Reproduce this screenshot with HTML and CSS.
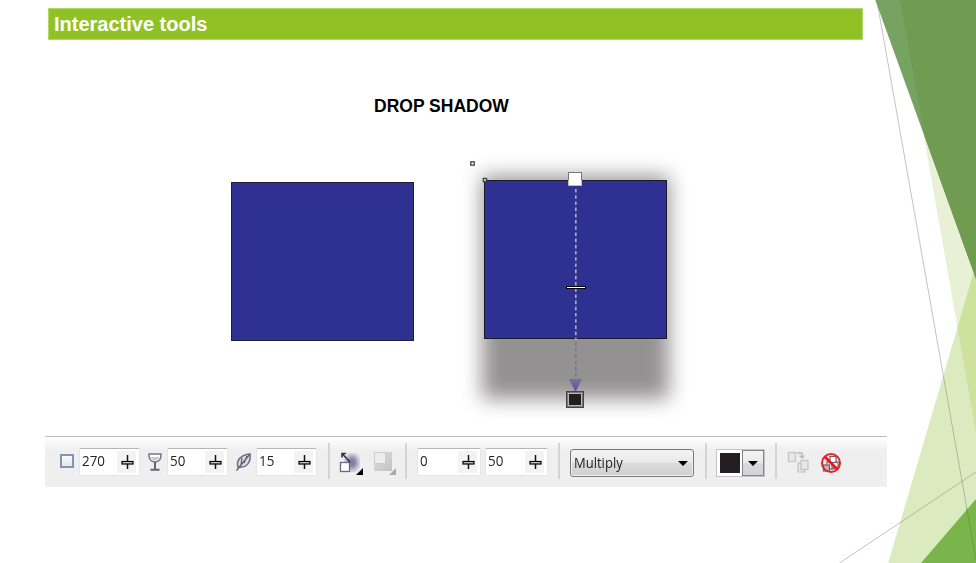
FILE: index.html
```html
<!DOCTYPE html>
<html lang="en">
<head>
<meta charset="utf-8">
<title>Interactive tools</title>
<link rel="stylesheet" href="styles.css">
</head>
<body>
<svg width="0" height="0" class="defs" aria-hidden="true">
  <symbol id="slider" viewBox="0 0 19 22">
    <path d="M10.500 4v14" stroke="#111" stroke-width="1.500"/>
    <rect x="5" y="10.500" width="11" height="2.500" fill="#ccc" stroke="#000" stroke-width="1.200"/>
  </symbol>
</svg>
<svg class="facets" viewBox="0 0 976 563" aria-hidden="true">
  <polygon points="900,0 976,0 976,433" fill="#e8f1d5"/>
  <polygon points="888.2,563 976,264.5 976,563" fill="#dcebbf"/>
  <polygon points="957.5,327.5 973.5,273 976,273 976,433" fill="#cde29d"/>
  <path d="M876.8 0L976 560M839.5 563L976 472" fill="none" stroke="#707070" stroke-opacity=".42"/>
  <polygon points="921,563 976,499 976,563" fill="#7ab54b"/>
  <path d="M966.7 508L976 560" stroke="#66a03c"/>
  <polygon points="875.3,0 976,0 976,279" fill="#76a262"/>
  <polygon points="900,0 976,0 976,279 924.5,136" fill="#709c52"/>
</svg>
<main class="slide">
  <h1 class="title">Interactive tools</h1>
  <h2 class="subtitle">DROP SHADOW</h2>
  <section class="demo">
    <div class="square"></div>
    <div class="shadowed">
      <div class="shade"></div>
      <div class="square raised"></div>
      <svg class="handles" viewBox="0 0 220 270" width="220" height="270">
        <path d="M115.8 29V180" stroke="#aaa7ba" stroke-width="1.7" stroke-dasharray="3.6 2.6"/>
        <path d="M115.8 182V220" stroke="#77779d" stroke-width="1.7" stroke-dasharray="3.6 2.6"/>
        <rect x="10.8" y="1.8" width="3.4" height="3.4" fill="#fff" stroke="#333" stroke-width="1.2"/>
        <rect x="23.2" y="18.3" width="3.5" height="3.5" fill="#bbb" stroke="#333" stroke-width="1"/>
        <rect x="108.5" y="12.5" width="13" height="13" fill="#fff" stroke="#777"/>
        <path d="M108.5 20v5.5h13V20" fill="none" stroke="#c7c28b"/>
        <rect x="106.5" y="126.5" width="19" height="2" fill="#fff" stroke="#000"/>
        <path d="M109 219h13l-6.5 13z" fill="url(#arrow)"/>
        <linearGradient id="arrow" x2="0" y2="1"><stop stop-color="#75749a"/><stop offset="1" stop-color="#5653a8"/></linearGradient>
        <rect x="106.5" y="231.5" width="17" height="16" fill="#777" stroke="#444"/>
        <rect x="108.5" y="233.5" width="13" height="12" fill="#231f20" stroke="#b7b7b4"/>
      </svg>
    </div>
  </section>
  <div class="toolbar">
    <svg class="icon lead" width="16" height="18" viewBox="0 0 16 18">
      <defs><linearGradient id="box" x2="0" y2="1"><stop stop-color="#fff"/><stop offset="1" stop-color="#dce5ea"/></linearGradient></defs>
      <rect x="2" y="3" width="12" height="12" fill="url(#box)" stroke="#8494b4" stroke-width="2"/>
    </svg>
    <div class="field f1"><span>270</span><svg class="spin"><use href="#slider"/></svg></div>
    <svg class="icon glass" width="16" height="20" viewBox="0 0 16 20">
      <path d="M2 2h12c.2 5-1.8 8-6 8S1.800 7 2 2z" fill="#fff" stroke="#77758a" stroke-width="1.5"/>
      <path d="M4 5h8c0 2-2 3.500-4 3.500S4 7 4 5z" fill="#c9c9d5"/>
      <path d="M8 10v7M3.500 17.700h9" stroke="#666477" stroke-width="2"/>
    </svg>
    <div class="field f2"><span>50</span><svg class="spin"><use href="#slider"/></svg></div>
    <svg class="icon feather" width="18" height="20" viewBox="0 0 18 20">
      <path d="M3 15C1 9 5 3 15 2c1 8-3 14-11 13z" fill="#dedee5" stroke="#73728a" stroke-width="1.6"/>
      <path d="M1.500 18.500L15 2M6 13l1-7M9 11l3-7" fill="none" stroke="#62606f" stroke-width="1.300"/>
    </svg>
    <div class="field f3"><span>15</span><svg class="spin"><use href="#slider"/></svg></div>
    <i class="sep s1"></i>
    <svg class="icon direction" width="26" height="26" viewBox="0 0 26 26">
      <defs><radialGradient id="mist" r=".62"><stop stop-color="#77779d"/><stop offset=".35" stop-color="#8c8cab"/><stop offset="1" stop-color="#aaaabe" stop-opacity="0"/></radialGradient></defs>
      <rect x="6" y="3" width="16" height="19" fill="url(#mist)"/>
      <rect x="2.500" y="12.500" width="9" height="9" fill="#fff" stroke="#666a88" stroke-width="1.300"/>
      <path d="M12 12L4.500 4M4 7.500V3.500H8" fill="none" stroke="#333" stroke-width="1.600"/>
      <path d="M25 18v7h-7z"/>
    </svg>
    <svg class="icon resize" width="26" height="26" viewBox="0 0 26 26">
      <defs><linearGradient id="fade" x2="1" y2="1"><stop stop-color="#e0e0e0"/><stop offset="1" stop-color="#c2c2c2"/></linearGradient></defs>
      <rect x="3" y="2" width="18" height="19" fill="url(#fade)"/>
      <rect x="3.500" y="2.500" width="11" height="11" fill="#ededed" stroke="#ccc"/>
      <path d="M25 18v7h-7z" fill="#aaa"/>
    </svg>
    <i class="sep s2"></i>
    <div class="field f4"><span>0</span><svg class="spin"><use href="#slider"/></svg></div>
    <div class="field f5"><span>50</span><svg class="spin"><use href="#slider"/></svg></div>
    <i class="sep s3"></i>
    <div class="select"><span>Multiply</span><i class="caret"></i></div>
    <i class="sep s4"></i>
    <div class="picker"><b class="swatch"></b><span class="drop"><i class="caret"></i></span></div>
    <i class="sep s5"></i>
    <svg class="icon copy" width="22" height="24" viewBox="0 0 22 24">
      <g fill="#e7e7e7" stroke="#c6c6c6" stroke-width="1.300"><rect x="1.500" y="2.500" width="7" height="9"/><rect x="11" y="13" width="7" height="9"/><rect x="14" y="10.500" width="7" height="9"/></g>
      <path d="M10 3h5v5M12.500 5.500L15 8l2.500-2.500" fill="none" stroke="#bbb" stroke-width="1.500"/>
    </svg>
    <svg class="icon clear" width="22" height="22" viewBox="0 0 22 22">
      <g fill="#fff" stroke="#626078" stroke-width="1.200"><rect x="7" y="10" width="7" height="7"/><rect x="3.500" y="13" width="6" height="6" fill="#bbb"/><rect x="12" y="10" width="6" height="6"/><rect x="10" y="4.500" width="6" height="6"/></g>
      <circle cx="11" cy="11" r="9" fill="none" stroke="#ed2222" stroke-width="2"/>
      <path d="M4.500 4.500l13 13" stroke="#f01414" stroke-width="2.800"/>
    </svg>
  </div>
</main>
</body>
</html>
```
FILE: styles.css
```css
* { box-sizing: border-box; }
body {
  margin: 0;
  width: 976px;
  height: 563px;
  overflow: hidden;
  background: #fff;
  font-family: "Liberation Sans", Arial, sans-serif;
}
.defs, .facets { position: absolute; top: 0; left: 0; }
.facets { width: 976px; height: 563px; z-index: -1; }
.slide { width: 887px; height: 563px; padding: 8px 0 0 45px; }
.title {
  width: 815px;
  height: 32px;
  margin: 0 0 0 3px;
  padding-left: 5px;
  border: 1px solid #b3d86a;
  background: #90c226;
  color: #fff;
  font-size: 20px;
  line-height: 30px;
}
.subtitle {
  height: 20px;
  margin: 56px 0 0 329px;
  font-size: 17.5px;
  line-height: 20px;
  color: #000;
}
.demo { display: flex; height: 270px; margin: 44px 0 0 186px; }
.square {
  width: 183px;
  height: 159px;
  margin-top: 22px;
  border: 1px solid #20203a;
  background: #2e3192;
}
.shadowed { position: relative; width: 220px; height: 270px; margin-left: 46px; padding-left: 24px; }
.shadowed .square { position: relative; margin-top: 20px; border-color: #1c1b27; }
.shade {
  position: absolute;
  left: 22px;
  top: 16px;
  width: 187px;
  height: 223px;
  background: #949192;
  filter: blur(10px);
}
.handles { position: absolute; left: 0; top: 0; }
.toolbar {
  display: flex;
  align-items: flex-start;
  width: 842px;
  height: 51px;
  margin-top: 6px;
  padding-top: 11px;
  border-top: 1px solid #bdbdbd;
  background: linear-gradient(#fff, #efefef 14px);
  font: 14px/24px "Open Sans", "Noto Sans", sans-serif;
  color: #222;
}
.toolbar > * { flex: none; }
.field {
  display: flex;
  justify-content: space-between;
  height: 28px;
  padding: 2px 3px 2px 2px;
  border: 1px solid #e4e5e8;
  border-top-color: #b4b5bd;
  border-radius: 2px;
  background: #fff;
}
.field span, .select span { transform: scaleX(.93); transform-origin: left; }
.field span { font-size: 14.4px; line-height: 20px; }
.select span { font-size: 14px; }
.spin { width: 19px; height: 22px; background: #f3f3f3; }
.icon { display: block; }
.lead { margin: 4px 0 0 14px; }
.f1 { width: 61px; margin-left: 4px; }
.glass { margin: 4px 0 0 7px; }
.f2 { width: 61px; margin-left: 4px; }
.feather { margin: 4px 0 0 7px; }
.f3 { width: 61px; margin-left: 3px; }
.sep { width: 2px; height: 36px; margin-top: -5px; background: #d4d4d4; }
.s1 { margin-left: 11px; }
.direction { margin: 2px 0 0 8px; }
.resize { margin: 2px 0 0 7px; }
.s2 { margin-left: 8px; }
.f4 { width: 64px; margin-left: 10px; }
.f5 { width: 63px; margin-left: 4px; }
.s3 { margin-left: 10px; }
.select {
  display: flex;
  justify-content: space-between;
  align-items: center;
  width: 124px;
  height: 28px;
  margin: 1px 0 0 10px;
  padding: 0 5px 0 3px;
  border: 1px solid #777;
  border-radius: 3px;
  background: linear-gradient(#f4f4f4, #e8e8e8 48%, #dadada 52%, #d0d0d0);
  box-shadow: inset 0 0 0 1px #f1f1f1;
}
.caret { width: 0; height: 0; border: 5px solid transparent; border-top-color: #000; border-bottom: 0; }
.s4 { margin-left: 11px; }
.picker { display: flex; width: 49px; height: 28px; margin: 1px 0 0 9px; padding: 1px; border: 1px solid #c3c4c9; background: #fff; }
.swatch { flex: none; width: 20px; height: 20px; margin: 2px 2px 0 2px; background: #231f20; }
.drop { flex: none; display: flex; align-items: center; justify-content: center; width: 22px; height: 26px; margin-top: -1px; border: 1px solid #858585; background: linear-gradient(#f4f4f4, #e9e9e9 48%, #dadada 52%, #d3d3d3); }
.s5 { margin-left: 10px; }
.copy { margin: 2px 0 0 10px; }
.clear { margin: 4px 0 0 11px; }
```
